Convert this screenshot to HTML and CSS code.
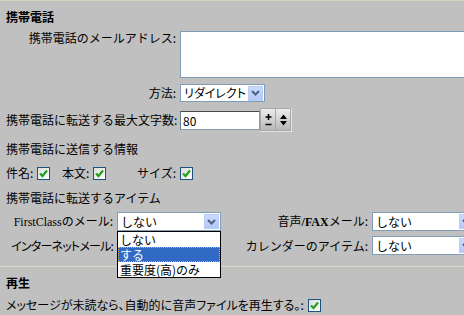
FILE: index.html
```html
<!DOCTYPE html>
<html lang="ja">
<head>
    <meta charset="UTF-8">
    <title>携帯電話</title>
    <link rel="stylesheet" href="styles.css">
</head>
<body>
    <div id="page">
        <div class="heading">携帯電話</div>

        <div class="formGrid">
            <label class="lbl top">携帯電話のメールアドレス:</label>
            <div class="textBox"></div>

            <label class="lbl">方法:</label>
            <div class="selectBox method">
                <span class="selText narrow">リダイレクト</span>
                <span class="arrow"><svg width="9" height="6" viewBox="0 0 9 6"><path d="M1 1 L4.5 4.5 L8 1" fill="none" stroke="#4d6185" stroke-width="2"/></svg></span>
            </div>

            <label class="lbl">携帯電話に転送する最大文字数:</label>
            <div class="spinRow">
                <div class="numBox">80</div>
                <div class="spinFrame">
                    <div class="spinBtn">
                        <svg width="9" height="14" viewBox="0 0 9 14"><path d="M4.5 1 V7 M1.5 4 H7.5 M1.5 11.5 H7.5" stroke="#000" stroke-width="1.6" fill="none"/></svg>
                    </div>
                    <div class="spinBtn">
                        <svg width="9" height="14" viewBox="0 0 9 14"><path d="M4.5 1.5 L8 6 H1 Z M1 8 H8 L4.5 12.5 Z" fill="#000"/></svg>
                    </div>
                </div>
            </div>
        </div>

        <div class="plain sendInfo">携帯電話に送信する情報</div>

        <div class="checkRow">
            <div class="checkItem">件名: <span class="cb"><svg width="11" height="11" viewBox="0 0 11 11"><path d="M2 5.5 L4.5 8 L9 2.5" fill="none" stroke="#21a121" stroke-width="2.2"/></svg></span></div>
            <div class="checkItem">本文: <span class="cb"><svg width="11" height="11" viewBox="0 0 11 11"><path d="M2 5.5 L4.5 8 L9 2.5" fill="none" stroke="#21a121" stroke-width="2.2"/></svg></span></div>
            <div class="checkItem">サイズ: <span class="cb"><svg width="11" height="11" viewBox="0 0 11 11"><path d="M2 5.5 L4.5 8 L9 2.5" fill="none" stroke="#21a121" stroke-width="2.2"/></svg></span></div>
        </div>

        <div class="plain forward">携帯電話に転送するアイテム</div>

        <div class="itemGrid">
            <label class="lbl"><span class="latin">FirstClass</span>のメール:</label>
            <div class="selectBox item open">
                <span class="selText">しない</span>
                <span class="arrow"><svg width="9" height="6" viewBox="0 0 9 6"><path d="M1 1 L4.5 4.5 L8 1" fill="none" stroke="#4d6185" stroke-width="2"/></svg></span>
                <div class="dropList">
                    <div class="opt">しない</div>
                    <div class="opt picked">する</div>
                    <div class="opt">重要度(高)のみ</div>
                </div>
            </div>
            <label class="lbl">音声<span class="latin bold">/FAX</span>メール:</label>
            <div class="selectBox item">
                <span class="selText">しない</span>
                <span class="arrow"><svg width="9" height="6" viewBox="0 0 9 6"><path d="M1 1 L4.5 4.5 L8 1" fill="none" stroke="#4d6185" stroke-width="2"/></svg></span>
            </div>

            <label class="lbl narrow tight">インターネットメール:</label>
            <div class="selectBox item covered">
                <span class="selText">しない</span>
                <span class="arrow"><svg width="9" height="6" viewBox="0 0 9 6"><path d="M1 1 L4.5 4.5 L8 1" fill="none" stroke="#4d6185" stroke-width="2"/></svg></span>
            </div>
            <label class="lbl">カレンダーのアイテム:</label>
            <div class="selectBox item">
                <span class="selText">しない</span>
                <span class="arrow"><svg width="9" height="6" viewBox="0 0 9 6"><path d="M1 1 L4.5 4.5 L8 1" fill="none" stroke="#4d6185" stroke-width="2"/></svg></span>
            </div>
        </div>

        <div class="separator"></div>

        <div class="heading play">再生</div>
        <div class="checkItem last"><span class="narrow">メッセージが未読なら、自動的に音声ファイルを再生する。:</span> <span class="cb"><svg width="11" height="11" viewBox="0 0 11 11"><path d="M2 5.5 L4.5 8 L9 2.5" fill="none" stroke="#21a121" stroke-width="2.2"/></svg></span></div>
    </div>
</body>
</html>
```
FILE: styles.css
```css
html, body
{
    margin: 0;
    padding: 0;
    background: #c0c0c0;
    overflow: hidden;
}
#page
{
    width: 464px;
    height: 315px;
    border-top: 1px solid #d6d2c2;
    box-sizing: border-box;
    font-family: "Noto Sans CJK JP", sans-serif;
    font-size: 12px;
    line-height: 16px;
    color: #000;
}
.latin
{
    font-family: "Liberation Serif", serif;
    font-size: 12px;
}
.bold
{
    font-weight: bold;
}
.narrow
{
    font-feature-settings: "palt";
}
.tight
{
    letter-spacing: -0.8px;
}
.heading
{
    font-weight: bold;
    margin: 8px 0 0 6px;
    height: 16px;
}
.lbl
{
    text-align: right;
    white-space: nowrap;
    align-self: center;
}
.lbl.top
{
    align-self: start;
    margin-top: -1px;
}
.formGrid
{
    display: grid;
    grid-template-columns: 170px 1fr;
    column-gap: 4px;
    row-gap: 6px;
    margin: 6px 0 0 6px;
}
.textBox
{
    height: 45px;
    border: 1px solid #7f9db9;
    background: #fff;
    margin-right: -20px;
}
.selectBox
{
    position: relative;
    display: flex;
    align-items: center;
    height: 17px;
    border: 1px solid #7f9db9;
    background: #fff;
    box-sizing: content-box;
}
.selectBox.method
{
    width: 83px;
    height: 16px;
}
.selectBox.item
{
    width: 102px;
    height: 17px;
}
/* hidden under the open list */
.selectBox.covered > .selText
{
    visibility: hidden;
}
.selText
{
    flex: 1;
    padding-left: 3px;
    white-space: nowrap;
}
.arrow
{
    display: flex;
    align-items: center;
    justify-content: center;
    width: 15px;
    height: 15px;
    margin-right: 1px;
    background: linear-gradient(#cbdafc, #b4c8f6);
    border: 1px solid #b8cbf3;
    box-sizing: border-box;
}
.spinRow
{
    display: flex;
    align-items: center;
    height: 24px;
}
.numBox
{
    width: 76px;
    height: 17px;
    padding-left: 2px;
    border: 1px solid #7f9db9;
    border-top-color: #4a4a4a;
    border-left-color: #6d7f93;
    background: #fff;
    line-height: 17px;
}
.spinFrame
{
    display: flex;
    gap: 1px;
    padding: 1px;
    background: #a8a8a8;
    border-right: 1px solid #e4e4e4;
    border-bottom: 1px solid #e4e4e4;
}
.spinBtn
{
    display: flex;
    align-items: center;
    justify-content: center;
    width: 14px;
    height: 21px;
    background: linear-gradient(#ececec, #b8b8b8);
}
.plain
{
    margin-left: 6px;
    height: 16px;
}
.sendInfo
{
    margin-top: 9px;
}
.checkRow
{
    display: grid;
    grid-template-columns: 56px 75px auto;
    margin: 8px 0 0 6px;
    height: 16px;
}
.checkItem
{
    display: flex;
    align-items: center;
    gap: 4px;
    white-space: nowrap;
}
.cb
{
    display: inline-flex;
    align-items: center;
    justify-content: center;
    width: 13px;
    height: 13px;
    border: 1px solid #1c5180;
    background: linear-gradient(135deg, #dcdcd7, #fff);
    box-sizing: border-box;
}
.forward
{
    margin-top: 9px;
}
.itemGrid
{
    display: grid;
    grid-template-columns: 107px 104px 143px 104px;
    column-gap: 4px;
    row-gap: 5px;
    margin: 6px 0 0 6px;
}
.itemGrid > .lbl:nth-child(3)
{
    margin-left: -4px;
}
.dropList
{
    position: absolute;
    left: -1px;
    top: 18px;
    width: 102px;
    border: 1px solid #000;
    background: #fff;
    z-index: 2;
}
.opt
{
    height: 15px;
    line-height: 15px;
    padding-left: 2px;
    white-space: nowrap;
}
.opt.picked
{
    background: #316ac5;
    color: #fff;
    outline: 1px dotted #f0b040;
    outline-offset: -1px;
}
.separator
{
    height: 1px;
    background: #dcd8cc;
    margin-top: 11px;
}
.play
{
    margin-top: 8px;
}
.last
{
    margin: 6px 0 0 6px;
    height: 16px;
}
```
